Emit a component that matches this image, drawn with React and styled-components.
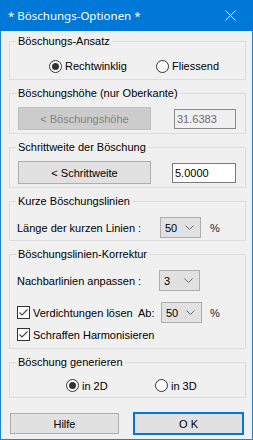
import styled, { createGlobalStyle } from "styled-components";

const GlobalStyle = createGlobalStyle`
  html, body {
    margin: 0;
    padding: 0;
    background: #f0f0f0;
  }
  body {
    font-family: "Liberation Sans", Arial, sans-serif;
    font-size: 11px;
    color: #000;
  }
`;

const Window = styled.div`
  width: 253px;
  height: 440px;
  box-sizing: border-box;
  border: 1px solid #1883d7;
  border-top: none;
  background: #f0f0f0;
  display: flex;
  flex-direction: column;
`;

const TitleBar = styled.div`
  height: 31px;
  margin: 0 -1px;
  background: #0078d7;
  color: #fff;
  display: flex;
  align-items: center;
  justify-content: space-between;
  padding-left: 8px;
  font-family: "Noto Sans", "Open Sans", sans-serif;
  font-size: 11.5px;
`;

const CloseBox = styled.div`
  width: 46px;
  height: 31px;
  display: flex;
  align-items: center;
  justify-content: center;
`;

const Body = styled.div`
  padding: 4px 6px 0 8px;
`;

const Group = styled.fieldset`
  margin: 0 0 7px;
  padding: 0;
  border: 1px solid #dcdcdc;
  min-width: 0;

  legend {
    margin-left: 6px;
    padding: 0 2px;
    line-height: 13px;
    font-size: 11px;
  }
`;

const Content = styled.div`
  height: ${(p) => p.$h}px;
  box-sizing: border-box;
  padding-top: ${(p) => p.$pt}px;
`;

const Row = styled.div`
  display: grid;
  grid-template-columns: ${(p) => p.$cols};
  align-items: center;
  padding-left: ${(p) => p.$pl}px;
  height: ${(p) => p.$h || 20}px;
  margin-bottom: ${(p) => p.$mb || 0}px;
`;

const Option = styled.label`
  display: flex;
  align-items: center;
  gap: 3px;
  white-space: nowrap;
`;

const RadioDot = styled.span`
  width: 11px;
  height: 11px;
  border: 1px solid #333;
  border-radius: 50%;
  background: #fff;
  display: flex;
  align-items: center;
  justify-content: center;

  &::after {
    content: "";
    width: 7px;
    height: 7px;
    border-radius: 50%;
    background: ${(p) => (p.$on ? "#333" : "transparent")};
  }
`;

const CheckBox = styled.span`
  width: 11px;
  height: 11px;
  border: 1px solid #333;
  background: #fff;
  display: flex;
  align-items: center;
  justify-content: center;
`;

const Button = styled.div`
  box-sizing: border-box;
  width: ${(p) => p.$w}px;
  height: ${(p) => p.$hgt || 23}px;
  display: flex;
  align-items: center;
  justify-content: center;
  background: ${(p) => (p.$disabled ? "#cccccc" : "#e1e1e1")};
  border: ${(p) =>
    p.$default ? "2px solid #0078d7" : p.$disabled ? "1px solid #bfbfbf" : "1px solid #adadad"};
  color: ${(p) => (p.$disabled ? "#838383" : "#000")};
  white-space: nowrap;
`;

const TextBox = styled.div`
  box-sizing: border-box;
  width: ${(p) => p.$w}px;
  height: 20px;
  display: flex;
  align-items: center;
  padding-left: 2px;
  border: 1px solid ${(p) => (p.$disabled ? "#8a8a8a" : "#7a7a7a")};
  background: ${(p) => (p.$disabled ? "#f0f0f0" : "#fff")};
  color: ${(p) => (p.$disabled ? "#6d6d6d" : "#000")};
`;

const Select = styled.div`
  box-sizing: border-box;
  width: 41px;
  height: 21px;
  display: flex;
  align-items: center;
  justify-content: space-between;
  padding: 0 6px 0 4px;
  background: #e1e1e1;
  border: 1px solid #adadad;
`;

const Pct = styled.span`
  color: #223;
`;

const Footer = styled.div`
  display: flex;
  gap: 14px;
  padding: 7px 0 0 9px;
  align-items: center;
`;

const Chevron = () => (
  <svg width="9" height="5" viewBox="0 0 9 5">
    <polyline points="0.5,0.5 4.5,4.5 8.5,0.5" fill="none" stroke="#666" strokeWidth="1" />
  </svg>
);

const Check = () => (
  <svg width="11" height="11" viewBox="0 0 11 11">
    <polyline points="1.5,5.5 4,8 9.5,2.5" fill="none" stroke="#444" strokeWidth="1.1" />
  </svg>
);

function Radio({ on, children }) {
  return (
    <Option>
      <RadioDot $on={on} />
      {children}
    </Option>
  );
}

function Checked({ children }) {
  return (
    <Option>
      <CheckBox>
        <Check />
      </CheckBox>
      {children}
    </Option>
  );
}

function Combo({ value }) {
  return (
    <Select>
      <span>{value}</span>
      <Chevron />
    </Select>
  );
}

export default function App() {
  return (
    <>
      <GlobalStyle />
      <Window>
        <TitleBar>
          <span>* Böschungs-Optionen *</span>
          <CloseBox>
            <svg width="11" height="11" viewBox="0 0 11 11">
              <path d="M0.5 0.5 L10.5 10.5 M10.5 0.5 L0.5 10.5" stroke="#fff" strokeWidth="1" />
            </svg>
          </CloseBox>
        </TitleBar>
        <Body>
          <Group>
            <legend>Böschungs-Ansatz</legend>
            <Content $h={31} $pt={8}>
              <Row $cols="107px auto" $pl={39}>
                <Radio on>Rechtwinklig</Radio>
                <Radio>Fliessend</Radio>
              </Row>
            </Content>
          </Group>

          <Group>
            <legend>Böschungshöhe (nur Oberkante)</legend>
            <Content $h={33} $pt={7}>
              <Row $cols="156px auto" $pl={8} $h={23}>
                <Button $w={133} $disabled>
                  &lt; Böschungshöhe
                </Button>
                <TextBox $w={62} $disabled>
                  31.6383
                </TextBox>
              </Row>
            </Content>
          </Group>

          <Group>
            <legend>Schrittweite der Böschung</legend>
            <Content $h={33} $pt={7}>
              <Row $cols="154px auto" $pl={8} $h={23}>
                <Button $w={133}>&lt; Schrittweite</Button>
                <TextBox $w={64}>5.0000</TextBox>
              </Row>
            </Content>
          </Group>

          <Group>
            <legend>Kurze Böschungslinien</legend>
            <Content $h={32} $pt={9}>
              <Row $cols="143px 50px auto" $pl={7} $h={21}>
                <span>Länge der kurzen Linien :</span>
                <Combo value="50" />
                <Pct>%</Pct>
              </Row>
            </Content>
          </Group>

          <Group>
            <legend>Böschungslinien-Korrektur</legend>
            <Content $h={87} $pt={9}>
              <Row $cols="142px auto" $pl={7} $h={21} $mb={11}>
                <span>Nachbarlinien anpassen :</span>
                <Combo value="3" />
              </Row>
              <Row $cols="121px 23px 49px auto" $pl={7} $h={21} $mb={5}>
                <Checked>Verdichtungen lösen</Checked>
                <span>Ab:</span>
                <Combo value="50" />
                <Pct>%</Pct>
              </Row>
              <Row $cols="auto" $pl={7} $h={13}>
                <Checked>Schraffen Harmonisieren</Checked>
              </Row>
            </Content>
          </Group>

          <Group>
            <legend>Böschung generieren</legend>
            <Content $h={28} $pt={10}>
              <Row $cols="89px auto" $pl={56} $h={13}>
                <Radio on>in 2D</Radio>
                <Radio>in 3D</Radio>
              </Row>
            </Content>
          </Group>
        </Body>
        <Footer>
          <Button $w={109} $hgt={21}>
            Hilfe
          </Button>
          <Button $w={111} $hgt={23} $default>
            O K
          </Button>
        </Footer>
      </Window>
    </>
  );
}
